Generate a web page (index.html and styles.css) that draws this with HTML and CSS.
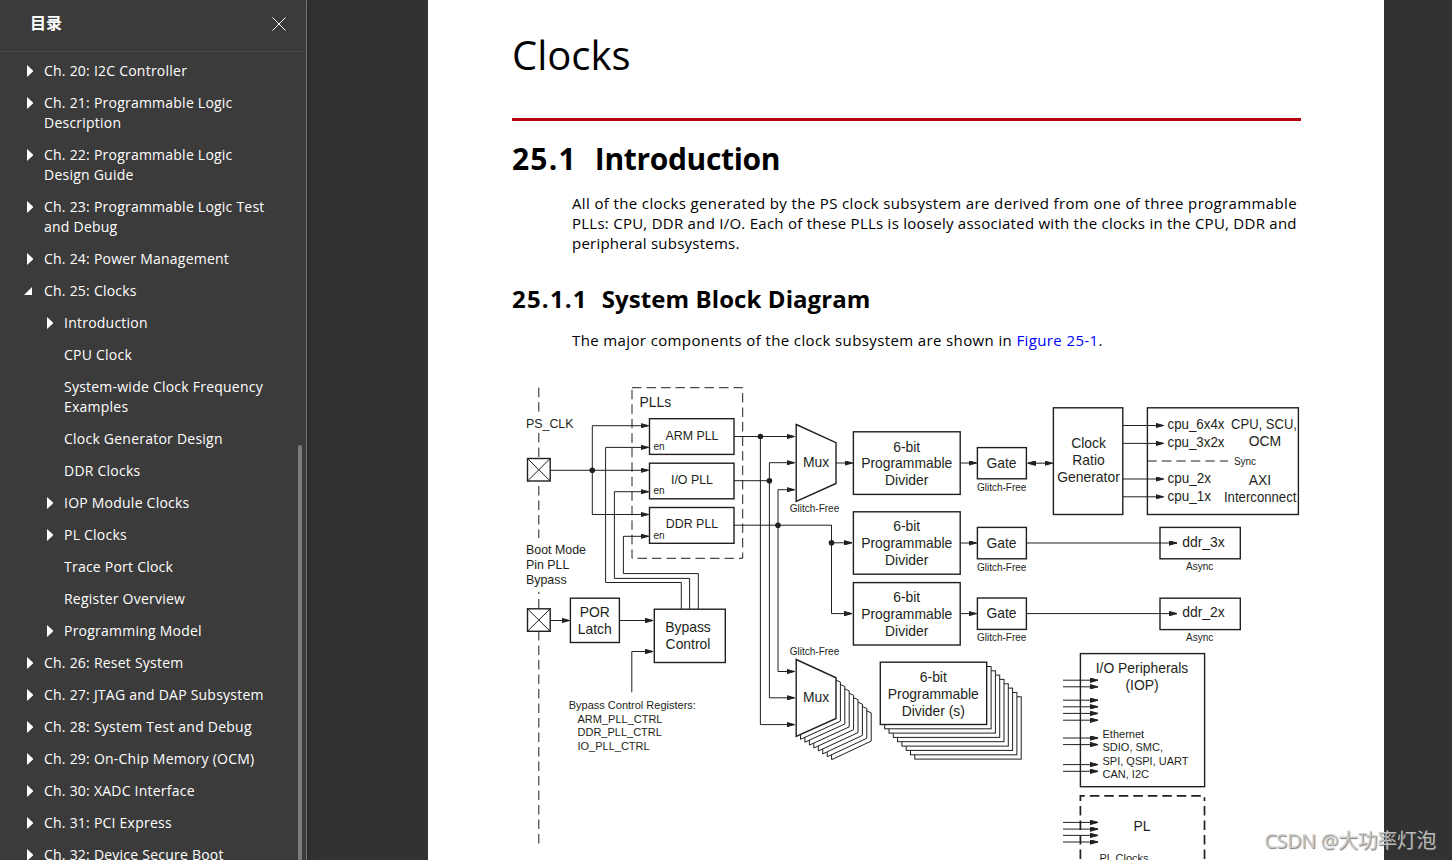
FILE: index.html
```
<!DOCTYPE html>
<html lang="zh-CN">

<head>
	<meta charset="UTF-8">
	<title>Clocks</title>
	<link rel="stylesheet" href="styles.css">
</head>

<body>
	<div class="viewer">
		<aside class="sidebar">
			<header class="sidebar-header">
				<h2>目录</h2>
				<svg class="close" width="14" height="14" viewBox="0 0 14 14"><path d="M.5 .5l13 13M13.5 .5l-13 13" /></svg>
			</header>
			<ul class="toc">
				<li class="closed">Ch. 20: I2C Controller</li>
				<li class="closed">Ch. 21: Programmable Logic<br>Description</li>
				<li class="closed">Ch. 22: Programmable Logic<br>Design Guide</li>
				<li class="closed">Ch. 23: Programmable Logic Test<br>and Debug</li>
				<li class="closed">Ch. 24: Power Management</li>
				<li class="open">Ch. 25: Clocks</li>
				<li class="sub closed">Introduction</li>
				<li class="sub">CPU Clock</li>
				<li class="sub">System-wide Clock Frequency<br>Examples</li>
				<li class="sub">Clock Generator Design</li>
				<li class="sub">DDR Clocks</li>
				<li class="sub closed">IOP Module Clocks</li>
				<li class="sub closed">PL Clocks</li>
				<li class="sub">Trace Port Clock</li>
				<li class="sub">Register Overview</li>
				<li class="sub closed">Programming Model</li>
				<li class="closed">Ch. 26: Reset System</li>
				<li class="closed">Ch. 27: JTAG and DAP Subsystem</li>
				<li class="closed">Ch. 28: System Test and Debug</li>
				<li class="closed">Ch. 29: On-Chip Memory (OCM)</li>
				<li class="closed">Ch. 30: XADC Interface</li>
				<li class="closed">Ch. 31: PCI Express</li>
				<li class="closed">Ch. 32: Device Secure Boot</li>
			</ul>
			<div class="scrollbar"></div>
		</aside>

		<main class="page">
			<h1>Clocks</h1>
			<h2 class="section"><span class="num">25.1</span>Introduction</h2>
			<p class="intro">
				<span class="l1">All of the clocks generated by the PS clock subsystem are derived from one of three programmable</span><br>
				<span class="l2">PLLs: CPU, DDR and I/O. Each of these PLLs is loosely associated with the clocks in the CPU, DDR and</span><br>
				<span class="l3">peripheral subsystems.</span>
			</p>
			<h3 class="subsection"><span class="num">25.1.1</span>System Block Diagram</h3>
			<p class="lead">The major components of the clock subsystem are shown in <a>Figure 25-1</a>.</p>

			<svg class="diagram" width="800" height="480" viewBox="512 380 800 480">
				<defs>
					<marker id="arrow" viewBox="0 0 8 5" refX="8" refY="2.5" markerWidth="8" markerHeight="5" markerUnits="userSpaceOnUse" orient="auto-start-reverse">
						<path d="M0 .3L8 2.5L0 4.7z" fill="#231f20" />
					</marker>
				</defs>

				<!-- chip boundary -->
				<g class="dash">
					<path d="M538.8 387.7V412M538.8 433V458M538.8 486V538M538.8 592v2M538.8 599v10M538.8 631V848" />
					<rect x="632" y="387.7" width="110.7" height="170.6" />
					<path d="M1147.3 461H1228" />
				</g>

				<!-- pins -->
				<g class="box">
					<rect x="527.5" y="458.5" width="22.7" height="22.5" />
					<rect x="527.5" y="608.8" width="22.7" height="22.5" />
				</g>
				<path class="thin" d="M527.5 458.5l22.7 22.5M550.2 458.5l-22.7 22.5M527.5 608.8l22.7 22.5M550.2 608.8l-22.7 22.5" />

				<!-- wires into the PLLs -->
				<g class="wire">
					<path d="M550 470.3H648.5" />
					<path d="M592.3 470.3V425.7H648.5" />
					<path d="M592.3 470.3V514.5H648.5" />
					<path d="M681.3 609V582.5H605.6V447.4H648.5" />
					<path d="M689.6 609V578.4H614.4V491.7H648.5" />
					<path d="M698.3 609V573.6H623.4V536.3H648.5" />
					<path d="M550 620.5H569.5" />
					<path d="M619.3 620.5H653" />
					<path d="M631.8 692.3V651.5H653" />
				</g>

				<!-- PLL outputs -->
				<g class="wire">
					<path d="M734 436.5H794.5" />
					<path d="M769.4 480.7V462.7H794.5" />
					<path d="M778 525V489.7H794.5" />
					<path d="M831.5 542.8H852" />
					<path d="M831.5 525V613.6H852" />
					<path d="M778 525V671.5H794.5" />
					<path d="M769.4 480.7V697.8H794.5" />
					<path d="M760.4 436.5V724.6H794.5" />
				</g>
				<path class="thin" d="M734 480.7H769.4M734 525.2H831.5" />
				<g class="dot">
					<circle cx="592.3" cy="470.3" r="2.8" />
					<circle cx="760.4" cy="436.5" r="2.8" />
					<circle cx="769.4" cy="480.7" r="2.8" />
					<circle cx="778" cy="525.2" r="2.8" />
					<circle cx="831.5" cy="542.8" r="2.8" />
				</g>

				<g class="box">
					<rect x="649.5" y="418.7" width="84.5" height="35.7" />
					<rect x="649.5" y="463.2" width="84.5" height="35.6" />
					<rect x="649.5" y="507.5" width="84.5" height="35.8" />
					<rect x="570.4" y="598.2" width="49" height="44.3" />
					<rect x="654.3" y="609.2" width="71" height="53.3" />
					<path d="M796.2 424.5L836 442.7V483.5L796.2 501.3z" />
					<rect x="853.4" y="431.8" width="106.8" height="62.6" />
					<rect x="853.4" y="511.8" width="106.8" height="62.4" />
					<rect x="853.4" y="582.6" width="106.8" height="62.4" />
					<rect x="977.4" y="447.6" width="49" height="31.2" />
					<rect x="977.4" y="527.4" width="49" height="31.4" />
					<rect x="977.4" y="598" width="49" height="31.4" />
					<rect x="1053.4" y="407.8" width="69.4" height="106.7" />
				</g>

				<!-- stacked muxes -->
				<g class="layer">
					<path d="M831.6 694.5L871.2 712.9V741.1L831.6 759.7z" />
					<path d="M827.2 690.1L866.8 708.5V738.3L827.2 756.8z" />
					<path d="M822.7 685.7L862.4 704.1V735.4L822.7 753.9z" />
					<path d="M818.3 681.3L858 699.7V732.6L818.3 751z" />
					<path d="M813.8 676.9L853.6 695.3V729.7L813.8 748z" />
					<path d="M809.4 672.5L849.2 690.9V726.9L809.4 745.1z" />
					<path d="M804.9 668.1L844.8 686.5V724L804.9 742.2z" />
					<path d="M800.5 663.7L840.4 682.1V721.2L800.5 739.3z" />
				</g>
				<path class="box" d="M796.2 659.5L836 677.8V718.5L796.2 736.3z" />

				<!-- stacked dividers -->
				<g class="layer">
					<rect x="914.8" y="696.8" width="106.4" height="62.3" />
					<rect x="910.5" y="692.5" width="106.4" height="62.3" />
					<rect x="906.2" y="688.1" width="106.4" height="62.3" />
					<rect x="901.9" y="683.8" width="106.4" height="62.3" />
					<rect x="897.6" y="679.4" width="106.4" height="62.3" />
					<rect x="893.3" y="675.1" width="106.4" height="62.3" />
					<rect x="889" y="670.8" width="106.4" height="62.3" />
					<rect x="884.7" y="666.5" width="106.4" height="62.3" />
				</g>
				<rect class="box" x="880.3" y="662.2" width="106.4" height="62.3" />

				<g class="outline">
					<rect x="1147.4" y="407.8" width="151" height="106.7" />
					<rect x="1160" y="527.4" width="80.3" height="31.4" />
					<rect x="1160" y="598.2" width="80.3" height="31.4" />
					<rect x="1080.4" y="653.6" width="124.2" height="133.1" />
					<path class="heavy-dash" d="M1080.4 801V795.9H1204.5V801M1080.4 806V860M1204.5 806V860" />
				</g>

				<g class="wire">
					<path d="M836 463H852.5" />
					<path d="M960.2 463H976.5" />
					<path d="M960.2 543H976.5" />
					<path d="M960.2 613.6H976.5" />
					<path class="both" d="M1027.5 463.2H1052.5" />
					<path d="M1122.8 425.5H1163.5" />
					<path d="M1122.8 443.4H1163.5" />
					<path d="M1122.8 479H1163.5" />
					<path d="M1122.8 496.8H1163.5" />
					<path d="M1026.4 543H1177" />
					<path d="M1026.4 613.6H1177" />
					<path d="M1063 680.2H1098" />
					<path d="M1063 686.8H1098" />
					<path d="M1063 700.2H1098" />
					<path d="M1063 706.8H1098" />
					<path d="M1063 713.4H1098" />
					<path d="M1063 720.2H1098" />
					<path d="M1063 738H1098" />
					<path d="M1063 744.6H1098" />
					<path d="M1063 764.6H1098" />
					<path d="M1063 771.3H1098" />
					<path d="M1063 822.4H1098" />
					<path d="M1063 829.1H1098" />
					<path d="M1063 835.4H1098" />
					<path d="M1063 842H1098" />
				</g>

				<g class="t14">
					<text x="639.5" y="407">PLLs</text>
				</g>
				<g class="t14 mid">
					<text x="594.8" y="617">POR</text>
					<text x="594.8" y="634">Latch</text>
					<text x="688" y="632">Bypass</text>
					<text x="688" y="649">Control</text>
					<text x="816" y="467">Mux</text>
					<text x="816" y="702">Mux</text>
					<text x="906.7" y="452">6-bit</text>
					<text x="906.7" y="468">Programmable</text>
					<text x="906.7" y="485">Divider</text>
					<text x="906.7" y="531">6-bit</text>
					<text x="906.7" y="548">Programmable</text>
					<text x="906.7" y="565">Divider</text>
					<text x="906.7" y="602">6-bit</text>
					<text x="906.7" y="619">Programmable</text>
					<text x="906.7" y="636">Divider</text>
					<text x="933.3" y="682">6-bit</text>
					<text x="933.3" y="699">Programmable</text>
					<text x="933.3" y="716">Divider (s)</text>
					<text x="1001.5" y="468">Gate</text>
					<text x="1001.5" y="548">Gate</text>
					<text x="1001.5" y="618">Gate</text>
					<text x="1088.5" y="448">Clock</text>
					<text x="1088.5" y="465">Ratio</text>
					<text x="1088.5" y="482">Generator</text>
					<text x="1203.5" y="547">ddr_3x</text>
					<text x="1203.5" y="617">ddr_2x</text>
					<text x="1264" y="429" textLength="66" lengthAdjust="spacingAndGlyphs">CPU, SCU,</text>
					<text x="1265" y="446">OCM</text>
					<text x="1260" y="485">AXI</text>
					<text x="1260.2" y="502" textLength="72.5" lengthAdjust="spacingAndGlyphs">Interconnect</text>
					<text x="1142" y="673">I/O Peripherals</text>
					<text x="1142" y="690">(IOP)</text>
					<text x="1142" y="831">PL</text>
				</g>
				<g class="t14">
					<text x="1167.5" y="429" textLength="57" lengthAdjust="spacingAndGlyphs">cpu_6x4x</text>
					<text x="1167.5" y="447" textLength="57" lengthAdjust="spacingAndGlyphs">cpu_3x2x</text>
					<text x="1167.5" y="483" textLength="43.5" lengthAdjust="spacingAndGlyphs">cpu_2x</text>
					<text x="1167.5" y="501" textLength="43.5" lengthAdjust="spacingAndGlyphs">cpu_1x</text>
				</g>
				<g class="t12 mid">
					<text x="692" y="440">ARM PLL</text>
					<text x="692" y="484">I/O PLL</text>
					<text x="692" y="528">DDR PLL</text>
				</g>
				<g class="t12">
					<text x="526" y="428">PS_CLK</text>
					<text x="526" y="554">Boot Mode</text>
					<text x="526" y="569">Pin PLL</text>
					<text x="526" y="584">Bypass</text>
				</g>
				<g class="t11">
					<text x="568.7" y="709">Bypass Control Registers:</text>
					<text x="577.5" y="723">ARM_PLL_CTRL</text>
					<text x="577.5" y="736">DDR_PLL_CTRL</text>
					<text x="577.5" y="750">IO_PLL_CTRL</text>
					<text x="1102.5" y="738">Ethernet</text>
					<text x="1102.5" y="751">SDIO, SMC,</text>
					<text x="1102.5" y="765">SPI, QSPI, UART</text>
					<text x="1102.5" y="778">CAN, I2C</text>
					<text x="1099.5" y="862">PL Clocks</text>
				</g>
				<g class="t10">
					<text x="653.5" y="450">en</text>
					<text x="653.5" y="494">en</text>
					<text x="653.5" y="539">en</text>
				</g>
				<g class="t10 mid">
					<text x="814.5" y="512">Glitch-Free</text>
					<text x="814.5" y="655">Glitch-Free</text>
					<text x="1001.7" y="491">Glitch-Free</text>
					<text x="1001.7" y="571">Glitch-Free</text>
					<text x="1001.7" y="641">Glitch-Free</text>
					<text x="1199.7" y="570">Async</text>
					<text x="1199.7" y="641">Async</text>
					<text x="1245" y="465">Sync</text>
				</g>
			</svg>
		</main>
		<div class="watermark">CSDN @大功率灯泡</div>
	</div>
</body>

</html>
```
FILE: styles.css
```
body {
	margin: 0;
	background-color: #323232;
	font-family: "Open Sans", "Noto Sans CJK SC", sans-serif;
	overflow: hidden;
}

.viewer {
	position: relative;
	display: flex;
	height: 860px;
	overflow: hidden;
}

.sidebar {
	position: relative;
	width: 306px;
	flex: none;
	background-color: #3b3b3b;
	border-right: 1px solid #767676;
	box-shadow: 0 0 6px rgba(0, 0, 0, 0.3);
	color: #fff;
	overflow: hidden;
}

.sidebar-header {
	display: flex;
	justify-content: space-between;
	box-sizing: border-box;
	height: 52px;
	padding: 11px 20px 0 30px;
	border-bottom: 1px solid #4a4a4a;
}

.sidebar-header h2 {
	margin: 0;
	font-size: 16px;
	line-height: 24px;
	font-weight: bold;
}

.close {
	margin-top: 6px;
	fill: none;
	stroke: #fff;
	stroke-width: 1;
}

.toc {
	list-style: none;
	margin: 0;
	padding: 3px 0 0;
	font-size: 14px;
	line-height: 20px;
	letter-spacing: 0.23px;
	white-space: nowrap;
}

.toc li {
	padding: 6px 0 6px 44px;
}

.toc .sub {
	padding-left: 64px;
}

.toc .closed::before,
.toc .open::before {
	content: "";
	float: left;
	width: 6px;
	height: 12px;
	margin: 4px 0 0 -17px;
	background-color: #fff;
	clip-path: polygon(0 0, 100% 45%, 100% 55%, 0 100%);
}

.toc .open::before {
	width: 8px;
	height: 8px;
	margin: 6px 0 0 -20px;
	clip-path: polygon(100% 0, 100% 100%, 0 100%);
}

.scrollbar {
	position: absolute;
	right: 4px;
	top: 445px;
	width: 4px;
	height: 430px;
	border-radius: 2px;
	background-color: #7c7c7c;
}

.page {
	box-sizing: border-box;
	width: 956px;
	height: 860px;
	flex: none;
	margin-left: 121px;
	padding-left: 84px;
	background-color: #fff;
	color: #000;
	overflow: hidden;
}

.page h1 {
	box-sizing: border-box;
	width: 789px;
	height: 121px;
	margin: 0;
	padding-top: 27px;
	border-bottom: 3px solid #b9000f;
	font-size: 40px;
	line-height: 56px;
	font-weight: 400;
}

.section,
.subsection {
	margin: 0;
	font-weight: 700;
	white-space: nowrap;
}

.section {
	padding-top: 18px;
	font-size: 30px;
	line-height: 40px;
	letter-spacing: -0.35px;
}

.section .num {
	margin-right: 18px;
	letter-spacing: 1.2px;
}

.intro,
.lead {
	margin: 0 0 0 60px;
	font-size: 15px;
	line-height: 20px;
	white-space: nowrap;
}

.intro {
	padding-top: 14px;
}

.intro .l1 {
	letter-spacing: 0.37px;
}

.intro .l2 {
	letter-spacing: 0.255px;
}

.intro .l3 {
	letter-spacing: 0.23px;
}

.subsection {
	padding-top: 31px;
	font-size: 24px;
	line-height: 30px;
	letter-spacing: 0.08px;
}

.subsection .num {
	margin-right: 14px;
	letter-spacing: 1.2px;
}

.lead {
	padding-top: 16px;
	letter-spacing: 0.38px;
}

.lead a {
	color: #00f;
}

.diagram {
	display: block;
	margin-top: 30px;
	font-family: "Liberation Sans", Arial, sans-serif;
	fill: none;
	stroke: #231f20;
}

.diagram text {
	fill: #231f20;
	stroke: none;
}

.mid {
	text-anchor: middle;
}

.t14 {
	font-size: 13.9px;
}

.t12 {
	font-size: 12.4px;
}

.t11 {
	font-size: 11px;
}

.t10 {
	font-size: 10px;
}

.box {
	fill: #fff;
	stroke-width: 1.4;
}

.outline {
	stroke-width: 1.4;
}

.layer {
	fill: #fff;
	stroke-width: 1;
}

.dash {
	stroke-width: 1;
	stroke-dasharray: 9.5 5;
}

.heavy-dash {
	stroke-width: 1.7;
	stroke-dasharray: 9.5 5;
}

.thin,
.wire {
	stroke-width: 1;
}

.wire path {
	marker-end: url(#arrow);
}

.wire .both {
	marker-start: url(#arrow);
}

.dot {
	fill: #231f20;
	stroke: none;
}

.watermark {
	position: absolute;
	right: 16px;
	bottom: 4px;
	font-size: 20px;
	line-height: 30px;
	letter-spacing: -0.4px;
	color: rgba(205, 205, 205, 0.9);
	text-shadow: 1px 1px 1px rgba(70, 70, 70, 0.7);
	white-space: nowrap;
}
```
